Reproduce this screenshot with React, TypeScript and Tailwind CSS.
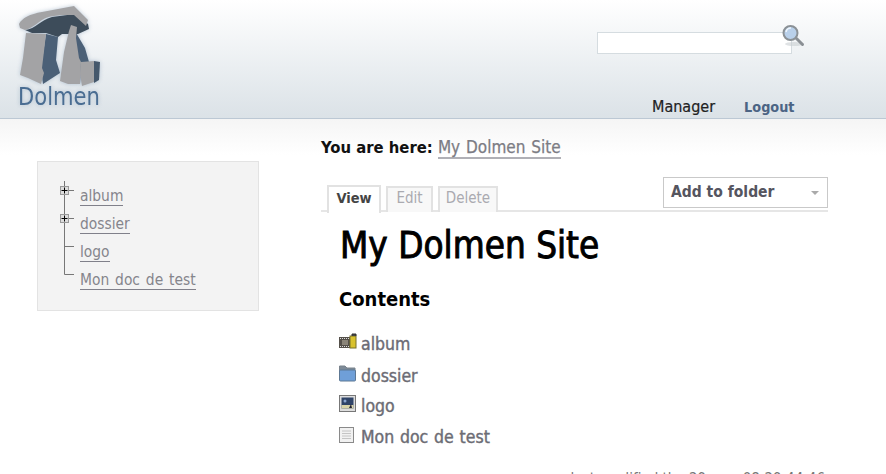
const font = "[font-family:'DejaVu_Sans_Condensed','DejaVu_Sans',sans-serif] [font-stretch:condensed]";

function Logo() {
  return (
    <svg width="112" height="118" viewBox="0 0 112 118" className="shrink-0 ml-[8px]" aria-label="Dolmen">
      <g transform="translate(-8 0)" style={{ filter: "drop-shadow(0 0 2px rgba(110,140,170,.45))" }}>
        <path d="M46 34 L58 37 L56 60 L60 73 L43 84 L41 68Z" fill="#4b6077" />
        <path d="M75 31 L85 48 L89 62 L81 62 L80 84 L74 84Z" fill="#4b6077" />
        <path d="M94 61 L100 62 L99 80 L94 83Z" fill="#45586c" />
        <path d="M25 30 C36 29 40 20 52 17 L75 14 L88 24 L89 29 L78 34 L62 34 L58 37 L46 33 L32 33Z" fill="#3d4c5a" />
        <path d="M19 24 C22 18 30 14 42 12 L74 6 L88 20 L86 26 L74 15 C60 15 50 15 42 20 C36 24 32 28 25 30 L20 28Z" fill="#a3a3a5" />
        <path d="M26 33 L46 34 L42 68 L44 73 L41 84 L28 78 L20 75 L23 58Z" fill="#a3a3a5" />
        <path d="M69 31 L71 25 L77 27 L76 38 L79 58 L81 62 L80 84 L68 84 L60 81 L64 52Z" fill="#a3a3a5" />
        <path d="M81 62 L94 61 L94 82 L82 86 L80 74Z" fill="#a3a3a5" />
        <text x="18" y="105" fontSize="25" fill="#4a6d92" textLength="82" lengthAdjust="spacingAndGlyphs" fontFamily="'DejaVu Sans', sans-serif">Dolmen</text>
      </g>
    </svg>
  );
}

function Magnifier() {
  return (
    <svg width="24" height="24" viewBox="0 0 24 24" className="absolute left-[184px] top-[-8px]">
      <ellipse cx="12" cy="19" rx="9" ry="2" fill="#c9ced2" opacity=".6" />
      <path d="M14.5 13.5 L20.5 19.5" stroke="#8a8f94" strokeWidth="3" strokeLinecap="round" />
      <circle cx="8.5" cy="8" r="7" fill="#b9d0ea" stroke="#8b9196" strokeWidth="2" />
      <path d="M4 7 A5 5 0 0 1 9 3" stroke="#eef5fc" strokeWidth="1.5" fill="none" />
    </svg>
  );
}

function TreeMark({ last, box }: { last?: boolean; box?: boolean }) {
  return (
    <svg width="30" height="28" viewBox="0 0 30 28" className="shrink-0">
      <path d={last ? "M14.5 0 V9.5 H24" : "M14.5 0 V28 M14.5 9.5 H24"} stroke="#777" fill="none" />
      {box && (
        <g>
          <rect x="10.5" y="5.5" width="8" height="8" fill="#ddd" stroke="#999" />
          <path d="M14.5 6.5 V12.5 M11.5 9.5 H17.5" stroke="#000" />
        </g>
      )}
    </svg>
  );
}

function TreeRow({ label, last, box }: { label: string; last?: boolean; box?: boolean }) {
  return (
    <li className="flex h-[28px]">
      <TreeMark last={last} box={box} />
      <div className="pt-[7px]">
        <a className="block text-[15.4px] [word-spacing:1.5px] leading-[16px] pb-[1px] text-[#85858c] border-b border-[#80808a]">{label}</a>
      </div>
    </li>
  );
}

function AlbumIcon() {
  return (
    <svg width="18" height="18" viewBox="0 0 18 18" className="shrink-0">
      <rect x="0" y="4" width="11" height="11" fill="#55504a" />
      <path d="M1 5.5 H10 M1 13.5 H10" stroke="#ddd" strokeDasharray="1 1" />
      <rect x="3" y="7" width="6" height="5" fill="#8a8478" />
      <rect x="11" y="3" width="6" height="12" fill="#d9c22e" stroke="#77702a" />
      <path d="M13 3 V1 H17 V3" fill="#444" stroke="#333" />
    </svg>
  );
}
function FolderIcon() {
  return (
    <svg width="18" height="18" viewBox="0 0 18 18" className="shrink-0">
      <path d="M0.5 1 H6 L8 3 H16 V6 H0.5Z" fill="#7d8a97" stroke="#79828c" />
      <rect x="0.5" y="5" width="16" height="11" rx="1" fill="#6f9fd8" stroke="#5d7894" />
    </svg>
  );
}
function ImageIcon() {
  return (
    <svg width="18" height="18" viewBox="0 0 18 18" className="shrink-0">
      <rect x="0.5" y="0.5" width="16" height="16" fill="#ddd" stroke="#777" />
      <rect x="2.5" y="2.5" width="12" height="11" fill="#2f4468" />
      <rect x="2.5" y="10" width="12" height="3.5" fill="#d8d4a8" />
      <path d="M10 13 L12 9 L13 13Z" fill="#223" />
      <circle cx="6" cy="6" r="1.5" fill="#8ba6cf" />
    </svg>
  );
}
function DocIcon() {
  return (
    <svg width="18" height="18" viewBox="0 0 18 18" className="shrink-0">
      <rect x="0.5" y="1.5" width="14" height="15" fill="#f1f1f1" stroke="#8a8a8a" />
      <path d="M3 5 H12 M3 7.5 H12 M3 10 H12 M3 12.5 H12" stroke="#c4c4c4" />
    </svg>
  );
}

function ContentRow({ icon, label, h }: { icon: React.ReactNode; label: string; h: string }) {
  return (
    <li className={`flex items-start gap-[4px] ${h}`}>
      {icon}
      <span className="text-[17.5px] [word-spacing:0.8px] leading-[22px] [-webkit-text-stroke:0.4px] text-[#6c6c74]">{label}</span>
    </li>
  );
}

export default function App() {
  return (
    <div className={`w-[886px] h-[474px] overflow-hidden bg-white ${font}`}>
      <header className="flex h-[119px] border-b border-[#bcc8d4] bg-gradient-to-b from-white to-[#dbe2e7]">
        <Logo />
        <div className="ml-[477px] flex flex-col w-[260px]">
          <div className="relative mt-[32px] w-[195px] h-[22px] bg-white border border-[#d5dce0]">
            <Magnifier />
          </div>
          <nav className="mt-[43px] ml-[55px] flex items-center gap-[29px] text-[16px] leading-[20px]">
            <a className="text-[#222] [-webkit-text-stroke:0.2px]">Manager</a>
            <a className="font-bold text-[14.3px] text-[#4c6484]">Logout</a>
          </nav>
        </div>
      </header>

      <div className="flex bg-gradient-to-b from-[#f5f5f5] to-white to-[36px]">
        <aside className="ml-[37px] mt-[42px] w-[222px] h-[150px] shrink-0 bg-[#f3f3f3] border border-[#e3e3e3] pt-[19px] pl-[12px]">
          <ul>
            <TreeRow label="album" box />
            <TreeRow label="dossier" box />
            <TreeRow label="logo" />
            <TreeRow label="Mon doc de test" last />
          </ul>
        </aside>

        <main className="ml-[62px] w-[507px] shrink-0">
          <p className="mt-[18px] text-[16.5px] leading-[20px] text-[#111] font-bold">
            You are here:{" "}
            <a className="text-[17px] font-normal [word-spacing:1px] [-webkit-text-stroke:0.25px] text-[#7c7c84] border-b-2 border-[#b0b0b6]">My Dolmen Site</a>
          </p>

          <div className="relative mt-[19px] h-[35px]">
            <div className="absolute left-0 right-0 bottom-[0px] h-[2px] bg-[#e6e6e6]" />
            <div className="absolute left-[6px] bottom-[-1px] flex gap-[5px] items-start">
              <div className="w-[54px] h-[28px] text-center pt-[1px] bg-white border-2 border-b-0 border-[#e2e2e2] text-[14.5px] leading-[20px] font-bold text-[#444]">View</div>
              <div className="w-[47px] h-[26px] mt-[1px] text-center bg-[#f8f8f8] border-2 border-b-0 border-[#e2e2e2] text-[15px] leading-[20px] text-[#aaaab0]">Edit</div>
              <div className="w-[60px] h-[26px] mt-[1px] text-center bg-[#f8f8f8] border-2 border-b-0 border-[#e2e2e2] text-[15px] leading-[20px] text-[#aaaab0]">Delete</div>
            </div>
            <div className="absolute right-0 top-[0px] w-[165px] h-[31px] border border-[#c9c9c9] bg-white flex items-center justify-between pl-[7px] pr-[8px]">
              <span className="text-[15.5px] font-bold text-[#55555f]">Add to folder</span>
              <span className="w-0 h-0 border-x-[4px] border-x-transparent border-t-[4px] border-t-[#aaa]" />
            </div>
          </div>

          <h1 className="ml-[19px] mt-[12px] text-[36.5px] leading-[44px] [-webkit-text-stroke:0.9px] text-black">My Dolmen Site</h1>
          <h2 className="ml-[18px] mt-[18px] text-[20px] leading-[26px] font-bold text-black">Contents</h2>

          <ul className="ml-[18px] mt-[21px]">
            <ContentRow icon={<AlbumIcon />} label="album" h="h-[32px]" />
            <ContentRow icon={<FolderIcon />} label="dossier" h="h-[30px]" />
            <ContentRow icon={<ImageIcon />} label="logo" h="h-[31px]" />
            <ContentRow icon={<DocIcon />} label="Mon doc de test" h="h-[30px]" />
          </ul>
          <p className="mt-[14px] pr-[3px] text-right text-[15px] leading-[18px] text-[#777]">last modified the 29 nov. 08:29:44:46</p>
        </main>
      </div>
    </div>
  );
}
